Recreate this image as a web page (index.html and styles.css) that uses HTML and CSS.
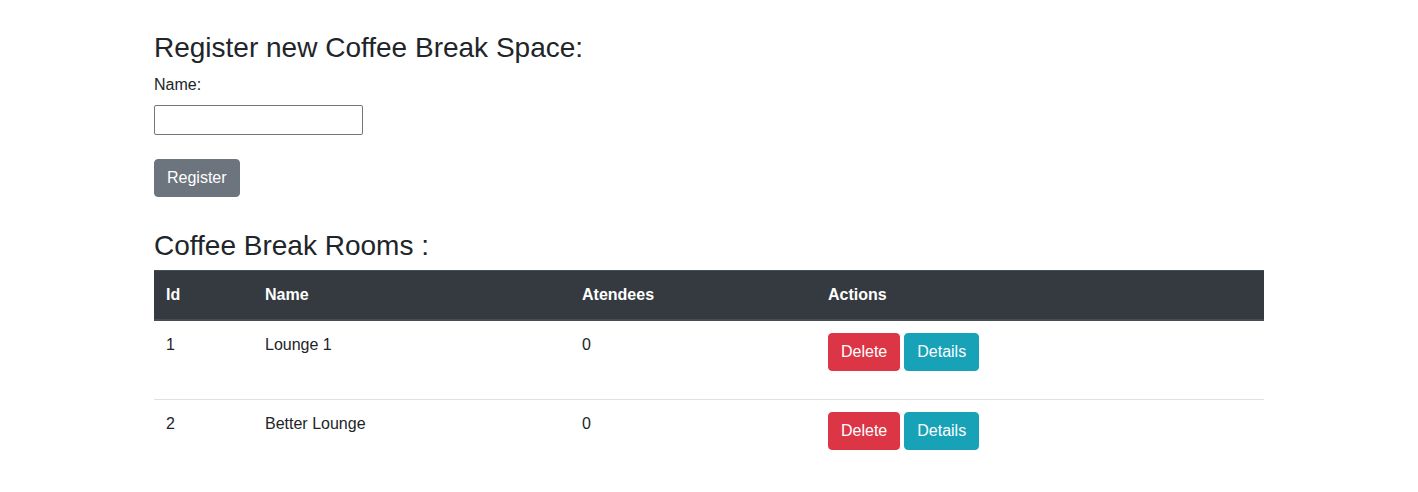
FILE: index.html
```html
<!DOCTYPE html>
<html lang="en">
<head>
<meta charset="utf-8">
<title>Coffee Break Spaces</title>
<link rel="stylesheet" href="styles.css">
</head>
<body>
<div class="container">
  <h3 class="heading">Register new Coffee Break Space:</h3>
  <form class="register-form">
    <label class="field-label" for="name">Name:</label>
    <div class="field">
      <input class="text-input" id="name" type="text">
    </div>
    <button class="btn btn-secondary" type="button">Register</button>
  </form>

  <h3 class="heading rooms-heading">Coffee Break Rooms :</h3>
  <table class="table">
    <thead class="thead-dark">
      <tr>
        <th class="col-id">Id</th>
        <th class="col-name">Name</th>
        <th class="col-att">Atendees</th>
        <th class="col-act">Actions</th>
      </tr>
    </thead>
    <tbody>
      <tr>
        <td>1</td>
        <td>Lounge 1</td>
        <td>0</td>
        <td>
          <div class="actions">
            <button class="btn btn-danger" type="button">Delete</button>
            <button class="btn btn-info" type="button">Details</button>
          </div>
        </td>
      </tr>
      <tr>
        <td>2</td>
        <td>Better Lounge</td>
        <td>0</td>
        <td>
          <div class="actions">
            <button class="btn btn-danger" type="button">Delete</button>
            <button class="btn btn-info" type="button">Details</button>
          </div>
        </td>
      </tr>
    </tbody>
  </table>
</div>
</body>
</html>
```

FILE: styles.css
```css
*, *::before, *::after { box-sizing: border-box; }

html, body {
  margin: 0;
  padding: 0;
  background: #ffffff;
}

body {
  font-family: "Liberation Sans", Arial, "Helvetica Neue", sans-serif;
  font-size: 16px;
  line-height: 1.5;
  color: #212529;
}

.container {
  width: 1140px;
  margin: 0 auto;
  padding: 31px 15px 0;
}

.heading {
  margin: 0 0 8px;
  font-size: 28px;
  font-weight: 500;
  line-height: 33.6px;
}

.rooms-heading {
  margin-top: 32px;
}

.register-form {
  margin: 0;
}

.field-label {
  display: inline-block;
  margin-bottom: 8px;
}

.field {
  margin-bottom: 24px;
  height: 30px;
}

.text-input {
  display: block;
  width: 209px;
  height: 30px;
  margin: 0;
  padding: 2px 3px;
  border: 1px solid #767676;
  border-radius: 2px;
  font-family: inherit;
  font-size: 16px;
  line-height: 24px;
  color: #212529;
  background: #fff;
}

.btn {
  display: inline-block;
  margin: 0;
  padding: 6px 12px;
  border: 1px solid transparent;
  border-radius: 4px;
  font-family: inherit;
  font-size: 16px;
  font-weight: 400;
  line-height: 24px;
  color: #fff;
  vertical-align: middle;
  cursor: pointer;
}

.btn-secondary { background: #6c757d; border-color: #6c757d; }
.btn-danger { background: #dc3545; border-color: #dc3545; }
.btn-info { background: #17a2b8; border-color: #17a2b8; }

.table {
  width: 1110px;
  border-collapse: collapse;
  margin-bottom: 16px;
}

.table th,
.table td {
  padding: 12px;
  text-align: left;
  vertical-align: top;
  border-top: 1px solid #dee2e6;
}

.thead-dark th {
  background: #343a40;
  color: #fff;
  font-weight: 700;
  vertical-align: bottom;
  border-top-color: #454d55;
  border-bottom: 2px solid #454d55;
}

.col-id { width: 99px; }
.col-name { width: 317px; }
.col-att { width: 246px; }
.col-act { width: 448px; }

.actions {
  display: flex;
  gap: 4px;
  margin-bottom: 16px;
}
```
